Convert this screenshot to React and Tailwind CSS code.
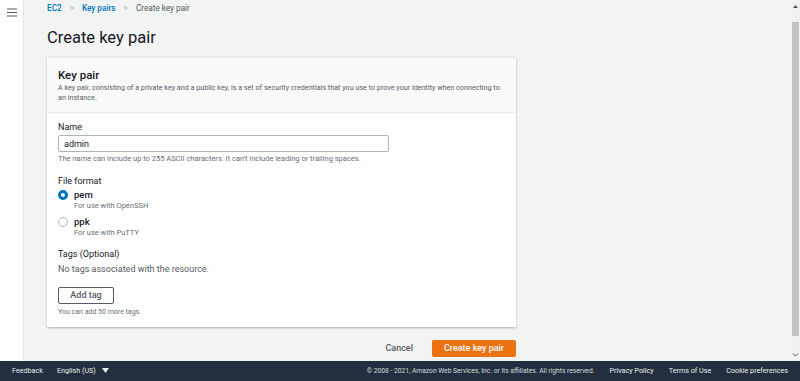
import { useState } from 'react';

const font = { fontFamily: 'Roboto, "Liberation Sans", Arial, sans-serif' };

const Radio = ({ checked, onClick, label, hint }) => (
  <button onClick={onClick} className="flex items-start gap-[6px] text-left">
    <span className={`mt-[1px] w-[10px] h-[10px] rounded-full bg-white shrink-0 ${checked ? 'border-[3px] border-[#0073bb]' : 'border border-[#aab7b8]'}`} />
    <span className="flex flex-col">
      <span className="text-[9.5px] leading-[12px] font-medium text-[#16191f]">{label}</span>
      <span className="text-[7.5px] leading-[10px] text-[#687078]">{hint}</span>
    </span>
  </button>
);

const App = () => {
  const [format, setFormat] = useState('pem');
  const [name, setName] = useState('admin');

  return (
    <div className="h-[381px] w-[800px] flex flex-col bg-[#f2f3f3] overflow-hidden" style={font}>
      <div className="flex flex-1 min-h-0">
        <aside className="w-[24px] bg-white border-r border-[#e5e5e5] flex justify-center pt-[8px]">
          <svg width="10" height="9" viewBox="0 0 10 9">
            <path d="M0 1h10M0 4.5h10M0 8h10" stroke="#545b64" strokeWidth="1.2" />
          </svg>
        </aside>
        <main className="flex-1 pl-[23px] pr-[275px]">
          <nav className="flex items-center gap-[8px] text-[8.2px] h-[16px]">
            <span className="text-[#0073bb] font-medium">EC2</span>
            <span className="text-[#aab7b8]">&gt;</span>
            <span className="text-[#0073bb] font-medium">Key pairs</span>
            <span className="text-[#aab7b8]">&gt;</span>
            <span className="text-[#545b64]">Create key pair</span>
          </nav>
          <h1 className="text-[16.5px] leading-[22px] text-[#16191f] mt-[11px]">Create key pair</h1>
          <section className="mt-[8px] bg-white shadow-[0_1px_2px_rgba(0,28,36,0.3)] border-t border-[#eaeded]">
            <div className="bg-[#fafafa] border-b border-[#eaeded] px-[11px] pt-[9px] pb-[9px]">
              <h2 className="text-[11.5px] leading-[16px] font-medium text-[#16191f]">Key pair</h2>
              <p className="text-[7.2px] leading-[10px] text-[#545b64]">
                A key pair, consisting of a private key and a public key, is a set of security credentials that you use to prove your identity when connecting to an instance.
              </p>
            </div>
            <div className="px-[11px] pt-[8px] pb-[10px]">
              <label className="block text-[9px] leading-[13px] text-[#16191f]">Name</label>
              <input
                value={name}
                onChange={(e) => setName(e.target.value)}
                className="block mt-[1px] w-[331px] h-[17px] border border-[#aab7b8] rounded-[2px] px-[5px] text-[9px] text-[#16191f] outline-none"
              />
              <p className="text-[7.5px] leading-[10px] text-[#687078] mt-[2px]">
                The name can include up to 255 ASCII characters. It can&apos;t include leading or trailing spaces.
              </p>
              <div className="text-[9px] leading-[13px] text-[#16191f] mt-[11px]">File format</div>
              <div className="flex flex-col gap-[5px] mt-[1px]">
                <Radio checked={format === 'pem'} onClick={() => setFormat('pem')} label="pem" hint="For use with OpenSSH" />
                <Radio checked={format === 'ppk'} onClick={() => setFormat('ppk')} label="ppk" hint="For use with PuTTY" />
              </div>
              <div className="text-[9px] leading-[13px] text-[#16191f] mt-[10px]">Tags (Optional)</div>
              <p className="text-[9px] leading-[13px] text-[#545b64] mt-[2px]">No tags associated with the resource.</p>
              <button className="block mt-[11px] w-[56px] h-[17px] border border-[#545b64] rounded-[2px] text-[9px] font-medium text-[#545b64] bg-white">
                Add tag
              </button>
              <p className="text-[7px] leading-[10px] text-[#687078] mt-[3px]">You can add 50 more tags.</p>
            </div>
          </section>
          <div className="flex justify-end items-center gap-[19px] mt-[13px]">
            <button className="text-[9px] font-medium text-[#545b64]">Cancel</button>
            <button className="h-[17px] w-[84px] bg-[#ec7211] rounded-[2px] text-[9px] font-medium text-white">
              Create key pair
            </button>
          </div>
        </main>
        <div className="w-[9px] bg-[#f1f1f1] flex flex-col items-center">
          <svg width="7" height="7" viewBox="0 0 7 7" className="mt-[3px]">
            <path d="M1 5l2.5-3L6 5z" fill="#505050" />
          </svg>
          <div className="w-[7px] flex-1 bg-[#c1c1c1] mt-[12px] mb-[15px]" />
          <svg width="7" height="7" viewBox="0 0 7 7" className="mb-[3px]">
            <path d="M1 2.5l2.5 2.5L6 2.5" stroke="#505050" fill="none" strokeWidth="1" />
          </svg>
        </div>
      </div>
      <footer className="h-[20px] bg-[#232f3e] flex items-center pl-[12px] pr-[12px] text-[7.2px] text-[#d5dbdb]">
        <span className="text-[#eaeded]">Feedback</span>
        <span className="ml-[14px] text-[#eaeded] flex items-center gap-[6px]">
          English (US)
          <svg width="7" height="5" viewBox="0 0 7 5"><path d="M0 0h7L3.5 5z" fill="#eaeded" /></svg>
        </span>
        <span className="ml-auto text-[6.7px] text-[#d5dbdb]">© 2008 - 2021, Amazon Web Services, Inc. or its affiliates. All rights reserved.</span>
        <span className="ml-[15px] text-[#eaeded]">Privacy Policy</span>
        <span className="ml-[15px] text-[#eaeded]">Terms of Use</span>
        <span className="ml-[15px] text-[#eaeded]">Cookie preferences</span>
      </footer>
    </div>
  );
};

export default App;
